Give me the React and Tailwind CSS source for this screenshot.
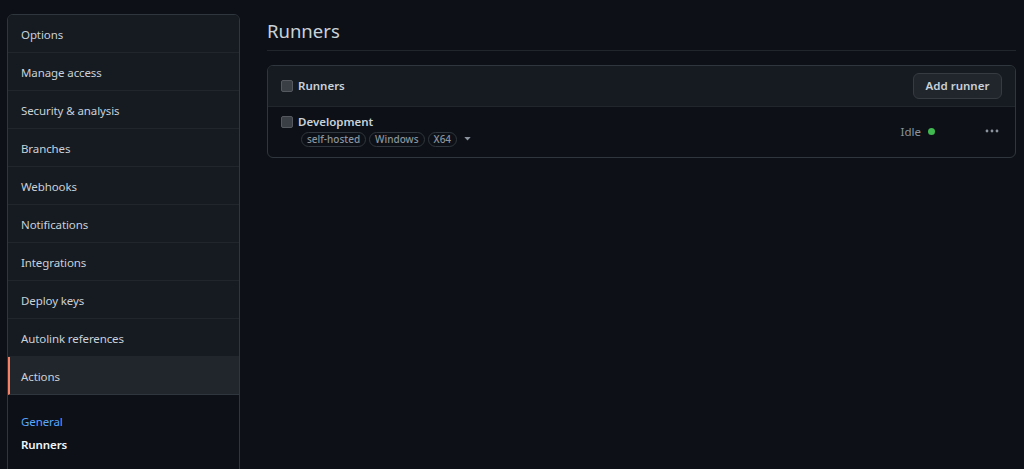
import React from "react";

const items = [
  "Options",
  "Manage access",
  "Security & analysis",
  "Branches",
  "Webhooks",
  "Notifications",
  "Integrations",
  "Deploy keys",
  "Autolink references",
];

function Checkbox() {
  return (
    <span className="inline-block w-[12px] h-[12px] rounded-[2px] bg-[#3a3f46] border border-[#55595f] shrink-0" />
  );
}

function Label({ children }) {
  return (
    <span className="px-[5px] h-[15px] flex items-center rounded-full border border-[#30363d] text-[10px] text-[#8b949e] font-medium leading-none">
      {children}
    </span>
  );
}

export default function App() {
  return (
    <div
      className="w-[1024px] h-[469px] overflow-hidden bg-[#0d1117] flex gap-[27px] pl-[7px] pt-[14px]"
      style={{ fontFamily: '"Noto Sans", "Liberation Sans", sans-serif' }}
    >
      <nav className="w-[233px] shrink-0 h-[470px] border border-[#30363d] rounded-t-[6px] overflow-hidden flex flex-col">
        {items.map((t) => (
          <div
            key={t}
            className="h-[38px] shrink-0 flex items-center px-[13px] pt-[2px] bg-[#161b22] border-b border-[#21262d] text-[11.5px] tracking-[-0.1px] text-[#c9d1d9]"
          >
            {t}
          </div>
        ))}
        <div className="h-[38px] shrink-0 flex items-center px-[11px] pt-[2px] bg-[#21262d] border-l-[2px] border-l-[#f78166] border-b border-b-[#30363d] text-[11.5px] tracking-[-0.1px] text-[#c9d1d9]">
          Actions
        </div>
        <div className="flex flex-col pt-[18px] gap-[6px] px-[13px] text-[11.5px] tracking-[-0.1px]">
          <span className="text-[#58a6ff]">General</span>
          <span className="text-[#f0f6fc] font-semibold">Runners</span>
        </div>
      </nav>
      <main className="w-[749px] shrink-0 flex flex-col">
        <h1 className="text-[18.5px] text-[#c9d1d9] leading-none pt-[8px] pb-[9px] border-b border-[#21262d]">
          Runners
        </h1>
        <div className="mt-[14px] border border-[#30363d] rounded-[6px] overflow-hidden">
          <div className="h-[41px] bg-[#161b22] border-b border-[#21262d] flex items-center pl-[13px] pr-[13px]">
            <Checkbox />
            <span className="ml-[5px] text-[11.5px] font-semibold text-[#c9d1d9]">Runners</span>
            <button className="ml-auto h-[26px] w-[89px] rounded-[6px] bg-[#21262d] border border-[#363b42] text-[11.5px] font-semibold text-[#c9d1d9]">
              Add runner
            </button>
          </div>
          <div className="h-[50px] flex items-start pl-[13px] pr-[16px] pt-[7px]">
            <div className="flex flex-col">
              <div className="flex items-center">
                <Checkbox />
                <span className="ml-[5px] text-[11.5px] font-semibold text-[#c9d1d9] leading-[16px]">
                  Development
                </span>
              </div>
              <div className="flex items-center gap-[3px] ml-[20px] mt-[2px]">
                <Label>self-hosted</Label>
                <Label>Windows</Label>
                <Label>X64</Label>
                <svg width="7" height="4" viewBox="0 0 8 5" className="ml-[4px]">
                  <path d="M0 0h8L4 4.5z" fill="#8b949e" />
                </svg>
              </div>
            </div>
            <div className="ml-auto flex items-center mt-[9px]">
              <span className="text-[11.5px] text-[#8b949e]">Idle</span>
              <span className="ml-[7px] w-[7px] h-[7px] rounded-full bg-[#3fb950]" />
              <svg width="14" height="4" viewBox="0 0 14 4" className="ml-[50px]">
                <circle cx="2" cy="2" r="1.4" fill="#8b949e" />
                <circle cx="7" cy="2" r="1.4" fill="#8b949e" />
                <circle cx="12" cy="2" r="1.4" fill="#8b949e" />
              </svg>
            </div>
          </div>
        </div>
      </main>
    </div>
  );
}
